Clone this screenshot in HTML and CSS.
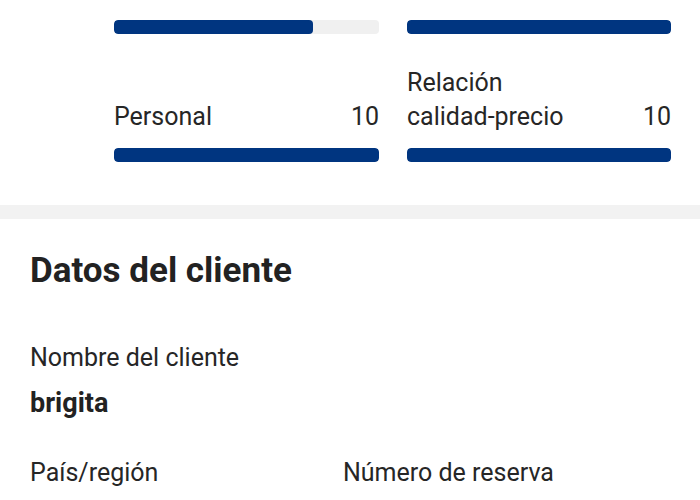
FILE: index.html
```html
<!DOCTYPE html>
<html lang="es">
<head>
<meta charset="utf-8">
<link rel="stylesheet" href="styles.css">
</head>
<body>
<section class="ratings">
  <div class="grid">
    <div class="cell">
      <div class="row"><span class="label">Limpieza</span><span class="val">7,5</span></div>
      <div class="track"><div class="fill" style="width:75%"></div></div>
    </div>
    <div class="cell">
      <div class="row"><span class="label">Confort</span><span class="val">10</span></div>
      <div class="track"><div class="fill" style="width:100%"></div></div>
    </div>
    <div class="cell">
      <div class="row"><span class="label">Personal</span><span class="val">10</span></div>
      <div class="track"><div class="fill" style="width:100%"></div></div>
    </div>
    <div class="cell">
      <div class="row"><span class="label">Relación<br>calidad-precio</span><span class="val">10</span></div>
      <div class="track"><div class="fill" style="width:100%"></div></div>
    </div>
  </div>
</section>
<div class="band"></div>
<section class="client">
  <h2 class="title">Datos del cliente</h2>
  <div class="field">
    <div class="flabel">Nombre del cliente</div>
    <div class="fvalue">brigita</div>
  </div>
  <div class="pair">
    <div class="flabel">País/región</div>
    <div class="flabel">Número de reserva</div>
  </div>
</section>
</body>
</html>
```

FILE: styles.css
```css
html, body {
  margin: 0;
  padding: 0;
  background: #ffffff;
}
body {
  width: 700px;
  height: 500px;
  overflow: hidden;
  font-family: Roboto, "Liberation Sans", sans-serif;
  color: #262626;
}
.ratings {
  margin-top: -30px;
  padding: 0 29px 43px 114px;
}
.grid {
  display: grid;
  grid-template-columns: 265px 264px;
  column-gap: 28px;
  row-gap: 32px;
}
.cell {
  display: flex;
  flex-direction: column;
}
.row {
  flex: 1;
  display: flex;
  justify-content: space-between;
  align-items: flex-end;
  font-size: 25px;
  line-height: 34px;
}
.track {
  margin-top: 14px;
  height: 14px;
  border-radius: 4px;
  background: #f0f0f0;
  overflow: hidden;
}
.grid .cell:nth-child(-n+2) .track {
  margin-top: 16px;
}
.fill {
  height: 100%;
  background: #003580;
  border-radius: 4px;
}
.band {
  height: 14px;
  background: #f2f2f2;
}
.client {
  padding: 32px 30px 0 30px;
}
.title {
  margin: 0;
  font-size: 35px;
  line-height: 40px;
  font-weight: 700;
  color: #222222;
}
.field {
  margin-top: 51px;
}
.flabel {
  font-size: 25px;
  line-height: 32px;
  color: #262626;
}
.fvalue {
  margin-top: 13px;
  font-size: 27px;
  line-height: 32px;
  font-weight: 700;
  color: #222222;
}
.pair {
  margin-top: 38px;
  display: grid;
  grid-template-columns: 313px 1fr;
}
```
